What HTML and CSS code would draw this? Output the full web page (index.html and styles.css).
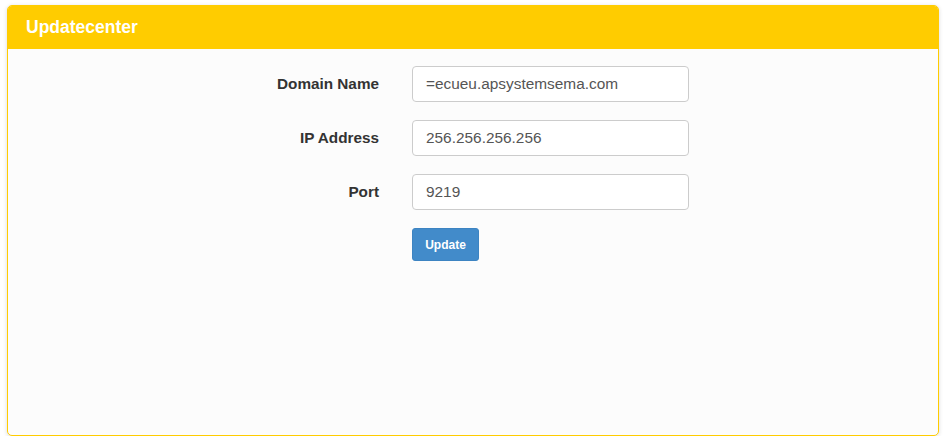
FILE: index.html
```html
<!DOCTYPE html>
<html>
<head>
<meta charset="utf-8">
<link rel="stylesheet" href="styles.css">
</head>
<body>
<div class="page">
  <section class="panel">
    <header class="panel-heading">Updatecenter</header>
    <div class="panel-body">
      <form class="form">
        <label class="label" for="domain">Domain Name</label>
        <input class="input" id="domain" type="text" value="=ecueu.apsystemsema.com">
        <label class="label" for="ip">IP Address</label>
        <input class="input" id="ip" type="text" value="256.256.256.256">
        <label class="label" for="port">Port</label>
        <input class="input" id="port" type="text" value="9219">
        <span></span>
        <div class="actions"><button class="btn" type="button">Update</button></div>
      </form>
    </div>
  </section>
</div>
</body>
</html>
```
FILE: styles.css
```css
html, body {
  margin: 0;
  padding: 0;
  background: #ffffff;
  font-family: "Liberation Sans", Arial, sans-serif;
}
.page {
  padding: 5px 9px 0 7px;
}
.panel {
  height: 431px;
  box-sizing: border-box;
  border: 1px solid #ffcc00;
  border-radius: 5px;
  background: #fcfcfc;
  box-shadow: 0 1px 4px rgba(0, 0, 0, 0.15);
  overflow: hidden;
  display: flex;
  flex-direction: column;
}
.panel-heading {
  background: #ffcc00;
  color: #ffffff;
  font-weight: bold;
  font-size: 17.5px;
  height: 43px;
  display: flex;
  align-items: center;
  padding-left: 18px;
  flex: none;
}
.panel-body {
  padding-top: 17px;
}
.form {
  display: grid;
  grid-template-columns: 371px 277px;
  column-gap: 33px;
  row-gap: 18px;
  align-items: center;
}
.label {
  text-align: right;
  font-weight: bold;
  font-size: 15.3px;
  color: #333333;
}
.input {
  box-sizing: border-box;
  width: 277px;
  height: 36px;
  border: 1px solid #cccccc;
  border-radius: 4px;
  background: #ffffff;
  padding: 0 13px;
  font-family: "Liberation Sans", Arial, sans-serif;
  font-size: 15.4px;
  color: #555555;
  margin: 0;
}
.actions {
  display: flex;
}
.btn {
  background: #428bca;
  border: 1px solid #3d84c2;
  border-radius: 3px;
  color: #ffffff;
  font-family: "Liberation Sans", Arial, sans-serif;
  font-weight: bold;
  font-size: 12px;
  height: 33px;
  width: 67px;
  padding: 0;
  margin: 0;
}
```
